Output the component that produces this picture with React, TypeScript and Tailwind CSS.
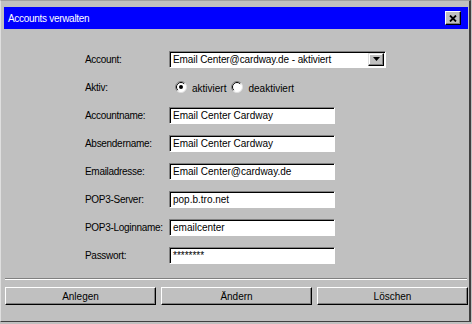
const fields = [
  { label: "Accountname:", value: "Email Center Cardway" },
  { label: "Absendername:", value: "Email Center Cardway" },
  { label: "Emailadresse:", value: "Email Center@cardway.de" },
  { label: "POP3-Server:", value: "pop.b.tro.net" },
  { label: "POP3-Loginname:", value: "emailcenter" },
  { label: "Passwort:", value: "********" },
];

const Radio = ({ checked }: { checked: boolean }) => (
  <svg width="12" height="12" viewBox="0 0 12 12" className="shrink-0">
    <circle cx="6" cy="6" r="5.5" fill="#fff" />
    <path d="M 2.1 9.9 A 5.5 5.5 0 0 1 9.9 2.1" stroke="#808080" strokeWidth="1" fill="none" />
    <path d="M 2.8 9.2 A 4.5 4.5 0 0 1 9.2 2.8" stroke="#000" strokeWidth="1" fill="none" />
    <path d="M 9.9 2.1 A 5.5 5.5 0 0 1 2.1 9.9" stroke="#dfdfdf" strokeWidth="1" fill="none" />
    {checked && <circle cx="6" cy="6" r="2" fill="#000" />}
  </svg>
);

const Button = ({ label }: { label: string }) => (
  <button className="w-[151px] h-[18px] bg-[#c0c0c0] border border-t-white border-l-white border-r-black border-b-black shadow-[inset_-1px_-1px_0_#808080] flex items-center justify-center text-[10px] text-black">
    {label}
  </button>
);

const inputBox =
  "h-[17px] bg-white border border-t-[#808080] border-l-[#808080] border-r-white border-b-white shadow-[inset_1px_1px_0_#000] flex items-center pl-[3px] text-[10px]";

export default function App() {
  return (
    <div className="w-[472px] h-[324px] bg-[#c0c0c0] font-['Liberation_Sans',Arial,sans-serif] text-[10px] text-black">
      <div className="w-[471px] h-[322px] flex flex-col border-t border-t-[#a0a0a0] border-l border-l-[#dfdfdf] border-r-2 border-r-[#404040] border-b border-b-[#404040]">
        <div className="ml-[3px] mt-[6px] w-[464px] h-[22px] bg-[#0000ff] flex items-center justify-between pl-[4px] pr-[7px]">
          <span className="text-white text-[10px] tracking-[-0.3px]">Accounts verwalten</span>
          <div className="w-[16px] h-[14px] bg-[#c0c0c0] border border-t-white border-l-white border-r-black border-b-black shadow-[inset_-1px_-1px_0_#808080] flex items-center justify-center">
            <svg width="8" height="7" viewBox="0 0 8 7">
              <path d="M1 0.5 L7 6.5 M7 0.5 L1 6.5" stroke="#000" strokeWidth="1.8" />
            </svg>
          </div>
        </div>

        <div className="mt-[16px] pl-[84px] flex flex-col">
          <div className="h-[28px] flex items-center">
            <span className="w-[84px] tracking-[-0.3px]">Account:</span>
            <div className={`${inputBox} w-[217px] justify-between pr-[1px]`}>
              <span className="tracking-[-0.1px]">Email Center@cardway.de - aktiviert</span>
              <div className="w-[16px] h-[13px] bg-[#c0c0c0] border border-t-[#dfdfdf] border-l-[#dfdfdf] border-r-black border-b-black shadow-[inset_-1px_-1px_0_#808080,inset_1px_1px_0_#fff] flex items-center justify-center">
                <svg width="7" height="4" viewBox="0 0 7 4">
                  <path d="M0 0 H7 L3.5 4 Z" fill="#000" />
                </svg>
              </div>
            </div>
          </div>
          <div className="h-[28px] flex items-center">
            <span className="w-[90px] tracking-[-0.3px]">Aktiv:</span>
            <div className="flex items-center">
              <Radio checked />
              <span className="ml-[5px] mt-[2px]">aktiviert</span>
              <span className="ml-[5px]">
                <Radio checked={false} />
              </span>
              <span className="ml-[5px] mt-[2px]">deaktiviert</span>
            </div>
          </div>
          {fields.map((f, i) => (
            <div className="h-[28px] flex items-center" key={i}>
              <span className="w-[84px] whitespace-nowrap tracking-[-0.3px]">{f.label}</span>
              <div className={`${inputBox} w-[166px]`}>{f.value}</div>
            </div>
          ))}
        </div>

        <div className="mt-[9px] ml-[4px] w-[462px] border-t border-t-[#808080] border-b border-b-white" />

        <div className="mt-[7px] ml-[4px] flex gap-[5px]">
          <Button label="Anlegen" />
          <Button label="Ändern" />
          <Button label="Löschen" />
        </div>
      </div>
    </div>
  );
}
